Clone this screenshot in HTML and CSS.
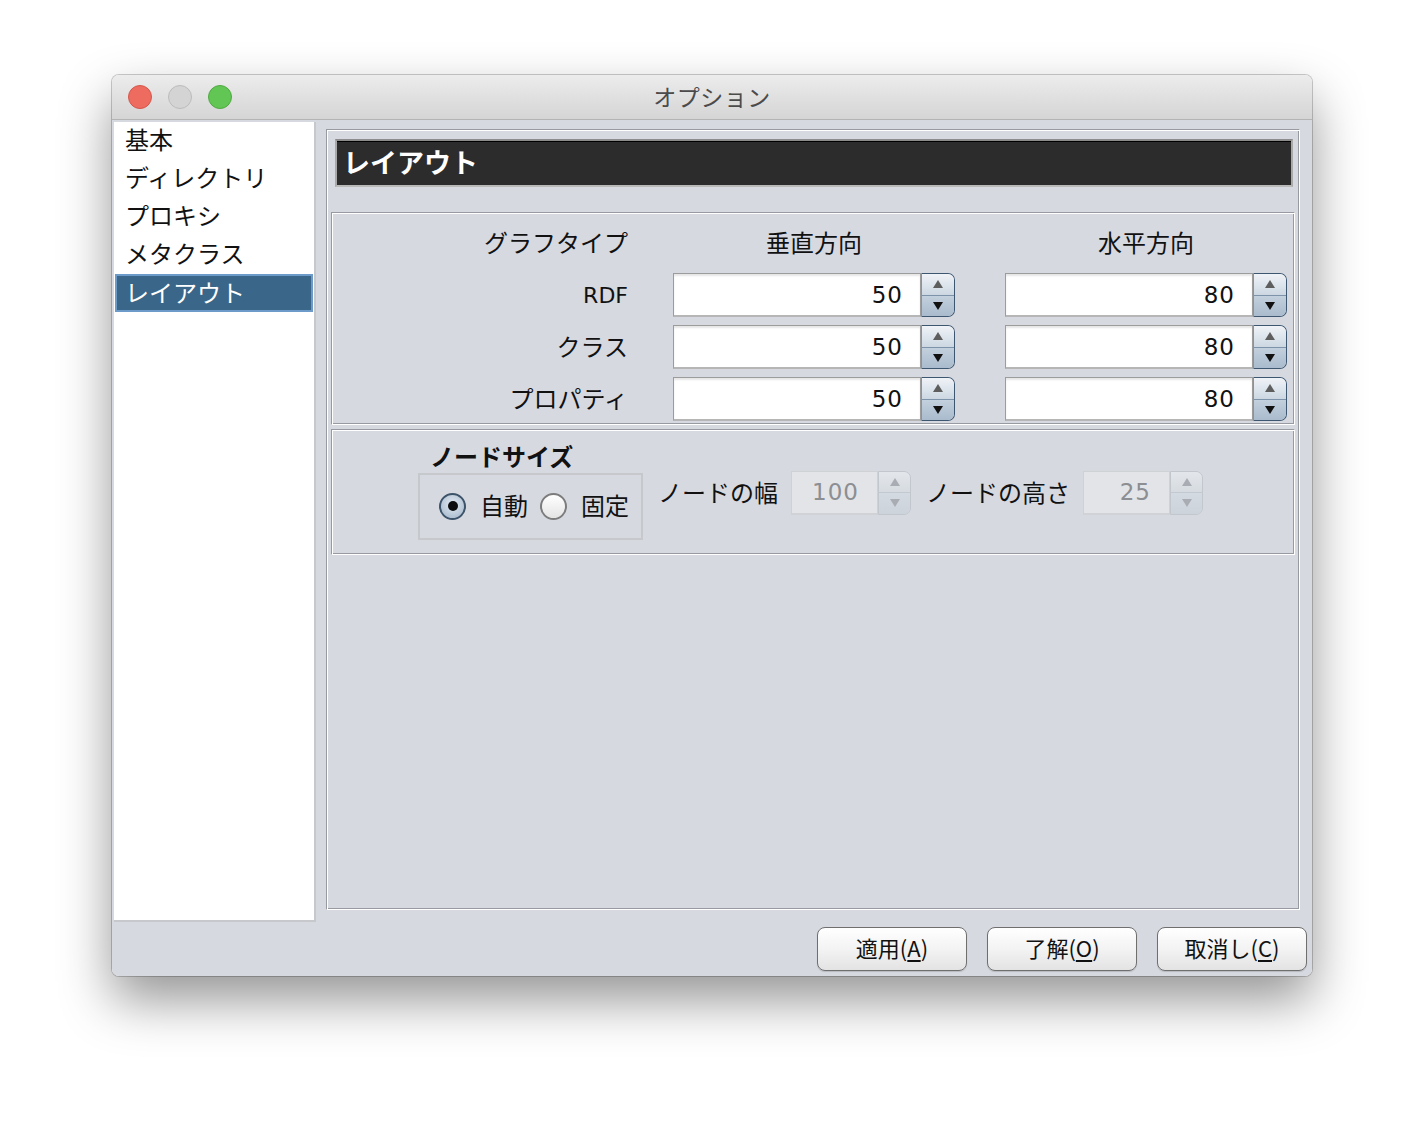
FILE: index.html
```html
<!DOCTYPE html>
<html lang="ja">
<head>
<meta charset="utf-8">
<title>オプション</title>
<link rel="stylesheet" href="styles.css">
</head>
<body>
<div class="window">
  <div class="titlebar">
    <div class="lights">
      <span class="light red"></span>
      <span class="light gray"></span>
      <span class="light green"></span>
    </div>
    <div class="title">オプション</div>
    <div></div>
  </div>
  <div class="wbody">
    <div class="content">
      <ul class="sidebar">
        <li class="item">基本</li>
        <li class="item">ディレクトリ</li>
        <li class="item">プロキシ</li>
        <li class="item">メタクラス</li>
        <li class="item selected">レイアウト</li>
      </ul>
      <div class="main etched">
        <div class="header">レイアウト</div>
        <div class="panel grid-panel etched">
          <div class="hdr hdr-label">グラフタイプ</div>
          <div class="hdr hdr-col">垂直方向</div>
          <div class="hdr hdr-col">水平方向</div>

          <div class="lbl latin">RDF</div>
          <div class="spinner"><div class="field">50</div><div class="spin"><span class="up"></span><span class="down"></span></div></div>
          <div class="spinner"><div class="field">80</div><div class="spin"><span class="up"></span><span class="down"></span></div></div>

          <div class="lbl">クラス</div>
          <div class="spinner"><div class="field">50</div><div class="spin"><span class="up"></span><span class="down"></span></div></div>
          <div class="spinner"><div class="field">80</div><div class="spin"><span class="up"></span><span class="down"></span></div></div>

          <div class="lbl">プロパティ</div>
          <div class="spinner"><div class="field">50</div><div class="spin"><span class="up"></span><span class="down"></span></div></div>
          <div class="spinner"><div class="field">80</div><div class="spin"><span class="up"></span><span class="down"></span></div></div>
        </div>
        <div class="panel node-panel etched">
          <div class="ns-col">
            <div class="ns-title">ノードサイズ</div>
            <div class="radio-box">
              <span class="radio checked"></span>
              <span class="radio-text">自動</span>
              <span class="radio"></span>
              <span class="radio-text">固定</span>
            </div>
          </div>
          <div class="ns-label">ノードの幅</div>
          <div class="spinner small disabled"><div class="field">100</div><div class="spin"><span class="up"></span><span class="down"></span></div></div>
          <div class="ns-label">ノードの高さ</div>
          <div class="spinner small disabled"><div class="field">25</div><div class="spin"><span class="up"></span><span class="down"></span></div></div>
        </div>
      </div>
    </div>
    <div class="buttons">
      <div class="btn">適用(<u>A</u>)</div>
      <div class="btn">了解(<u>O</u>)</div>
      <div class="btn">取消し(<u>C</u>)</div>
    </div>
  </div>
</div>
</body>
</html>
```

FILE: styles.css
```css
* { box-sizing: border-box; }

html { background: #ffffff; }

body {
  margin: 0;
  padding: 75px 0 0 112px;
  height: 1124px;
  overflow: hidden;
  background: #ffffff;
  font-family: "Noto Sans CJK JP", "Noto Sans", sans-serif;
  color: #111;
}

.window {
  width: 1200px;
  height: 901px;
  border-radius: 7px;
  overflow: hidden;
  display: flex;
  flex-direction: column;
  box-shadow: 0 0 0 1px rgba(0,0,0,0.2), 0 24px 52px rgba(0,0,0,0.42);
}

.titlebar {
  height: 45px;
  flex: none;
  display: grid;
  grid-template-columns: 1fr auto 1fr;
  align-items: center;
  background: linear-gradient(#ececec, #d5d5d5);
  border-bottom: 1px solid #b4b4b4;
}

.lights {
  display: flex;
  gap: 16px;
  padding-left: 16px;
}

.light {
  width: 24px;
  height: 24px;
  border-radius: 50%;
}
.light.red { background: #ee6b60; border: 1px solid #d4574d; }
.light.gray { background: #d4d4d4; border: 1px solid #bcbcbc; }
.light.green { background: #62c655; border: 1px solid #51a943; }

.title {
  font-size: 23px;
  color: #4b4b4b;
  letter-spacing: 0.5px;
  padding-bottom: 2px;
}

.wbody {
  flex: 1;
  background: #d6d9e0;
  display: flex;
  flex-direction: column;
}

.content {
  display: flex;
  gap: 10px;
  padding: 2px 12px 0 2px;
}

.sidebar {
  list-style: none;
  margin: 0;
  padding: 0 1px;
  width: 202px;
  height: 800px;
  background: #fff;
  border-right: 2px solid #c6c8cb;
  border-bottom: 2px solid #c6c8cb;
}

.item {
  height: 38px;
  line-height: 34px;
  padding-left: 10px;
  font-size: 24px;
  color: #111;
}

.item.selected {
  background: #3a6689;
  color: #fff;
  border: 2px solid #6c9bc9;
  line-height: 31px;
  padding-left: 8px;
}

.etched {
  border-top: 1px solid #979aa0;
  border-left: 1px solid #979aa0;
  border-right: 1px solid #ffffff;
  border-bottom: 1px solid #ffffff;
  box-shadow: inset 1px 1px 0 #ffffff, inset -1px -1px 0 #979aa0;
}

.main {
  width: 974px;
  height: 781px;
  margin-top: 7px;
  display: flex;
  flex-direction: column;
}

.header {
  margin: 9px 6px 0 8px;
  height: 48px;
  flex: none;
  background: #2c2c2c;
  border: 2px solid #a9a9a9;
  border-top-color: #8c8c8c;
  border-bottom-color: #b9b9b9;
  box-shadow: inset 0 1px 0 #000;
  color: #fff;
  font-weight: bold;
  font-size: 27px;
  padding: 0 0 3px 6px;
  display: flex;
  align-items: center;
}

.panel {
  margin: 0 4px;
  flex: none;
}

.grid-panel {
  margin-top: 25px;
  height: 213px;
  display: grid;
  grid-template-columns: 296px 327px 332px;
  grid-template-rows: 52px 44px 44px 44px;
  row-gap: 8px;
}

.hdr {
  font-size: 24px;
  display: flex;
  align-items: center;
  padding-top: 4px;
}

.hdr-label { justify-content: flex-end; }

.hdr-col {
  width: 282px;
  justify-self: end;
  justify-content: center;
}

.lbl {
  font-size: 24px;
  display: flex;
  align-items: center;
  justify-content: flex-end;
  padding-bottom: 3px;
}

.lbl.latin {
  font-family: "DejaVu Sans", sans-serif;
  font-size: 22px;
  padding-bottom: 0;
}

.spinner {
  display: flex;
  width: 282px;
  height: 44px;
  justify-self: end;
}

.field {
  flex: 1;
  background: #fff;
  border: 1px solid #9c9c9c;
  border-bottom: 2px solid #b6b6b6;
  box-shadow: inset 0 2px 2px rgba(0,0,0,0.1);
  font-family: "DejaVu Sans", sans-serif;
  font-size: 23px;
  padding-right: 17px;
  display: flex;
  align-items: center;
  justify-content: flex-end;
  letter-spacing: 1px;
}

.spin {
  width: 34px;
  flex: none;
  display: flex;
  flex-direction: column;
  border: 1px solid #3e5771;
  border-left-color: #8195aa;
  border-radius: 0 7px 7px 0;
  overflow: hidden;
}

.up, .down {
  flex: 1;
  display: flex;
  align-items: center;
  justify-content: center;
}

.up {
  background: linear-gradient(#f0f3f7, #ccd7e2);
  border-bottom: 1px solid #7d93aa;
}

.down {
  background: linear-gradient(#c3d0dd, #a9bbcd);
}

.up::after {
  content: "";
  border-left: 5px solid transparent;
  border-right: 5px solid transparent;
  border-bottom: 8px solid #5e5e5e;
}

.down::after {
  content: "";
  border-left: 5px solid transparent;
  border-right: 5px solid transparent;
  border-top: 8px solid #111;
}

.node-panel {
  margin-top: 4px;
  height: 126px;
  display: flex;
  align-items: center;
  padding-left: 86px;
}

.ns-col {
  display: flex;
  flex-direction: column;
}

.ns-title {
  font-weight: bold;
  font-size: 24px;
  line-height: 28px;
  margin-left: 12px;
  position: relative;
  top: -3px;
}

.radio-box {
  width: 225px;
  height: 67px;
  border: 2px solid #c6c8cc;
  display: flex;
  align-items: center;
  padding-left: 19px;
}

.radio {
  width: 27px;
  height: 27px;
  border-radius: 50%;
  border: 2px solid #7c7c7c;
  background: linear-gradient(#ffffff, #e4e4e4);
  flex: none;
  display: flex;
  align-items: center;
  justify-content: center;
}

.radio.checked {
  border-color: #3d5369;
  background: radial-gradient(circle at 50% 40%, #e3eaf2, #9fb3c8);
}

.radio.checked::after {
  content: "";
  width: 10px;
  height: 10px;
  border-radius: 50%;
  background: #0d0d0d;
}

.radio-text {
  font-size: 24px;
  margin: 0 12px 3px 14px;
}

.ns-label {
  font-size: 24px;
  margin: 0 13px 2px 15px;
}

.spinner.small {
  width: 120px;
  margin-top: 1px;
}

.spinner.small .spin { width: 33px; }

.disabled .field {
  background: #e2e4e8;
  border-color: #cfd1d5;
  border-bottom-color: #d0d2d6;
  box-shadow: none;
  color: #8c8e92;
  padding-right: 18px;
}

.disabled .spin {
  border-color: #c2c7ce;
}

.disabled .up {
  background: linear-gradient(#e3e6ea, #d6dbe1);
  border-bottom-color: #c3c9d0;
}

.disabled .down {
  background: linear-gradient(#d4dae1, #cdd3db);
}

.disabled .up::after { border-bottom-color: #a9adb3; }
.disabled .down::after { border-top-color: #a9adb3; }

.buttons {
  display: flex;
  justify-content: flex-end;
  gap: 20px;
  padding: 5px 5px 0 0;
}

.btn {
  width: 150px;
  height: 44px;
  border-radius: 8px;
  border: 1px solid #6f6f6f;
  background: linear-gradient(#ffffff, #f3f3f3 50%, #e3e3e3);
  box-shadow: 0 1px 1px rgba(0,0,0,0.15);
  font-size: 22px;
  display: flex;
  align-items: center;
  justify-content: center;
  padding-bottom: 4px;
  color: #111;
}

.btn u {
  text-decoration-thickness: 2px;
  text-underline-offset: 3px;
}
```
